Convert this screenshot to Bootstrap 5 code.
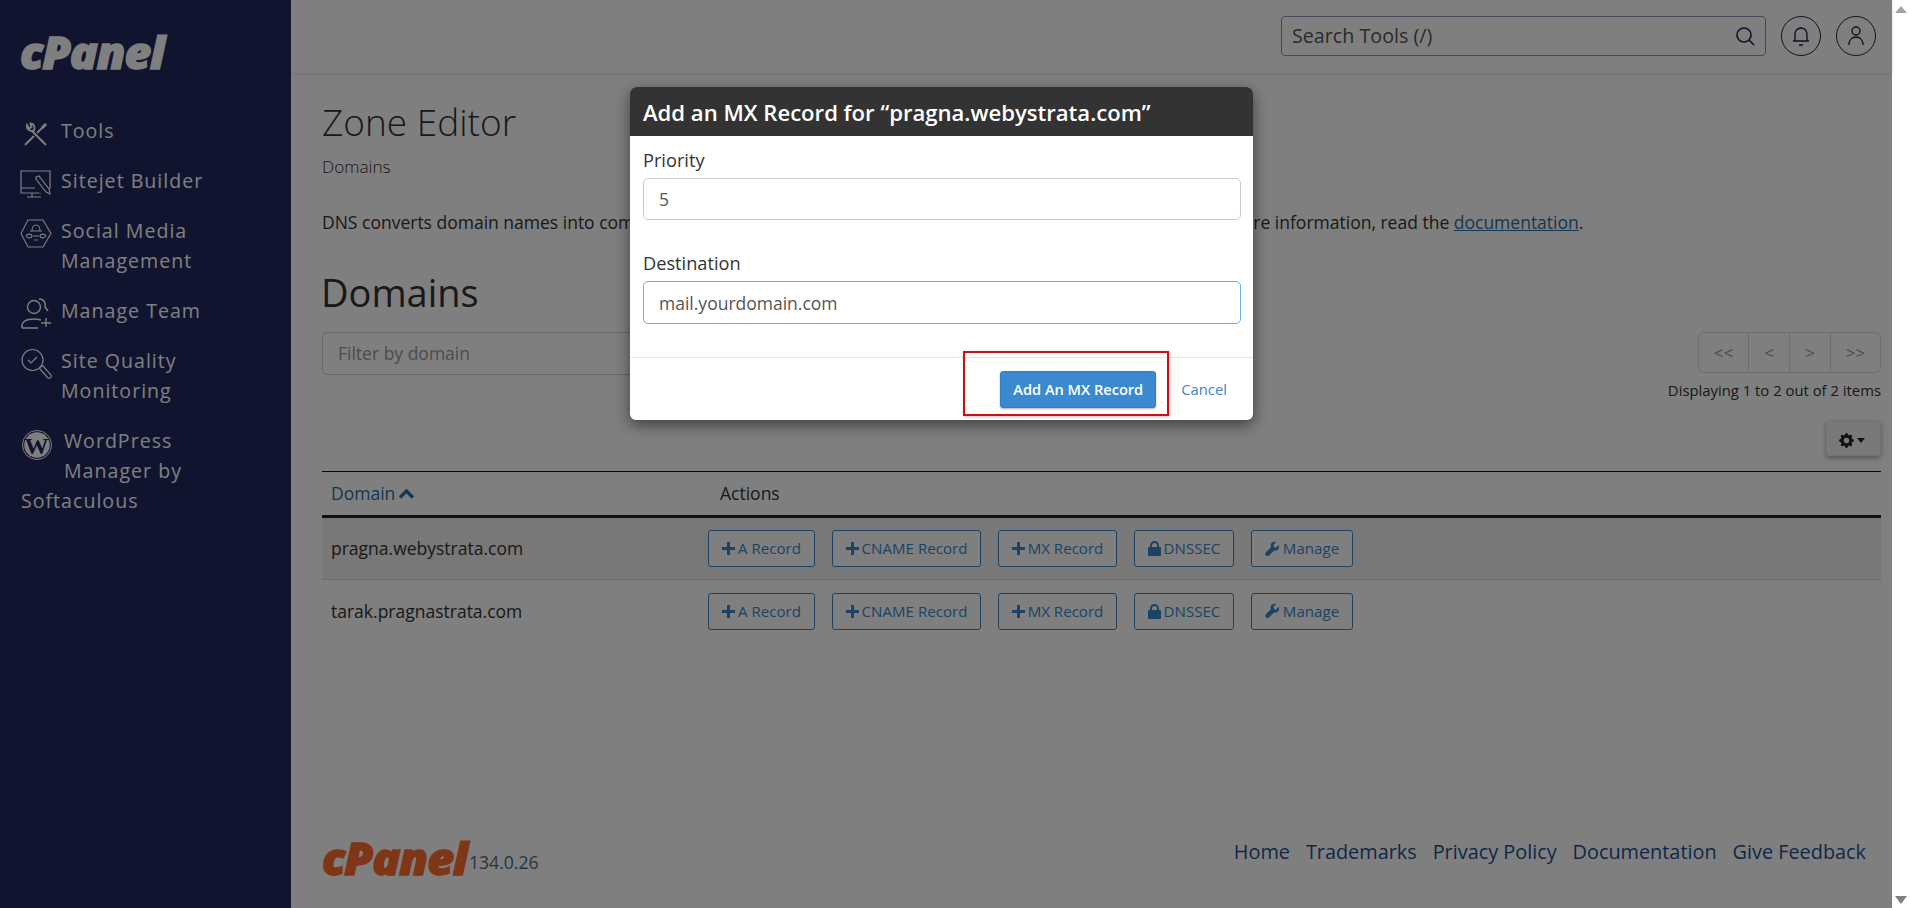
<!doctype html>
<html lang="en">
<head>
<meta charset="utf-8">
<title>Zone Editor</title>
<link href="https://cdn.jsdelivr.net/npm/bootstrap@5.3.0/dist/css/bootstrap.min.css" rel="stylesheet">
<style>
html,body{height:100%;overflow:hidden}
body{font-family:"Open Sans","Liberation Sans",sans-serif;background:#fff;color:#333;font-size:18px}
.stage{height:908px;width:1910px}
.shell{width:1892px;height:908px;position:relative}
.rail{width:18px;background:#fff;padding:6px 3px 4px 3px}
.tri-up{width:0;height:0;border-left:6px solid transparent;border-right:6px solid transparent;border-bottom:7px solid #a3a3a3}
.tri-down{width:0;height:0;border-left:6px solid transparent;border-right:6px solid transparent;border-top:8px solid #808080}
.side{width:291px;background:#20285d;color:#fff;padding-top:30px}
.side-logo{display:block;margin-left:19px;margin-bottom:31px;overflow:visible}
.side-item{padding:10px 60px 10px 21px;font-size:19.6px;line-height:30px;letter-spacing:1px;color:#fff}
.ico-box{width:40px;height:30px}
.ico-box.tall{height:60px}
.ico-box.wp{width:43px;height:60px}
.ico-box svg{display:block;overflow:visible}
.logo-txt{font-family:"Open Sans",sans-serif;font-weight:800;font-style:italic;letter-spacing:-1px}
.topbar{height:73px;background:#fff;box-shadow:0 1px 4px rgba(0,0,0,.12);padding-right:16px;padding-top:16px;gap:15px}
.search{width:485px;height:40px;border:1px solid #8b93b0;border-radius:4px;padding:0 10px;font-size:19.7px;color:#555}
.circle{width:40px;height:40px;border:1px solid #1b2545;border-radius:50%}
.body-pad{padding:0 11px 0 31px}
.zone-h{font-size:37px;font-weight:300;line-height:48px;margin:25px 0 0;color:#333}
.zone-sub{font-size:17.2px;font-weight:300;line-height:24px;margin-top:9px;color:#333}
.zone-p{font-size:17.5px;line-height:27px;margin:30px 0 0;white-space:nowrap;color:#333}
.zone-p a{color:#2b6ca3}
.zone-h2{font-size:38px;font-weight:400;line-height:44px;margin:34px 0 0 -1px;color:#333}
.filter-row{margin-top:18px;height:139px}
.filter{width:460px;height:43px;border:1px solid #ccc;border-radius:5px;padding:0 15px;font-size:17.5px;color:#999;background:#fff;line-height:41px}
.pager .btn{height:41px;width:42px;padding:0;font-size:17px;border-color:#ddd;color:#999;background:#fff;opacity:1}
.pager .btn.wide{width:51px}
.disp{font-size:14.85px;line-height:20px;margin-top:7px;color:#333}
.gear{width:55px;height:35px;margin-top:21px;background:#f2f2f2;border:1px solid #e6e6e6;border-radius:3px;box-shadow:0 2px 5px rgba(0,0,0,.35);color:#222;padding:0 3px 0 0}
.gear .car{display:inline-block;width:0;height:0;border-left:4.5px solid transparent;border-right:4.5px solid transparent;border-top:5px solid #222;margin-left:3px;vertical-align:2px}
.dtable{width:1559px;margin:0;border-top:1px solid #111;table-layout:fixed}
.dtable th{font-weight:400;height:45px;padding:0 9px;border-bottom:3px solid #222;vertical-align:middle;font-size:17.5px;background:#fff;color:#333}
.dtable th a{color:#2b6ca3;text-decoration:none}
.dtable th svg{margin-left:3px;vertical-align:1px}
.dtable td{height:63px;padding:0 9px;font-size:17.5px;vertical-align:middle;border-bottom:1px solid #ddd;color:#333}
.dtable tr:last-child td{border-bottom:0}
.dtable tr.alt td{background:#f0f0f0}
.dtable th.act{padding-left:21px}
.acts{gap:17px}
.act-btn{height:37px;padding:0;font-size:15.1px;line-height:35px;color:#3b86c8;border:1px solid #3b86c8;background:#fff;border-radius:3px;display:inline-flex;align-items:center;justify-content:center;gap:3px;text-decoration:none}
.act-btn svg{flex:none;fill:currentColor}
.wa{width:107px}.wc{width:149px}.wm{width:119px}.wd{width:100px}.wg{width:102px}
.foot{padding:0 26px 0 31px;height:88px}
.foot-ver{font-size:17.6px;color:#4f6a82;margin-top:29px;margin-left:-1px}
.foot-links{gap:16px;margin-top:17px;font-size:19.85px}
.foot-links a{color:#1c4f94;text-decoration:none}
.shade{position:absolute;inset:0;width:auto;height:auto;background:#000;opacity:.5;z-index:10}
.dlg{position:absolute;left:630px;top:87px;width:623px;height:333px;z-index:20;border:0;border-radius:6px;overflow:visible;box-shadow:0 5px 15px rgba(0,0,0,.5)}
.dlg .modal-header{height:49px;background:#333;color:#fff;padding:0 13px;border:0;border-radius:6px 6px 0 0}
.dlg .modal-title{font-size:22.1px;font-weight:600;line-height:28px}
.dlg .modal-body{padding:12px 12px 0 13px}
.lab{font-size:18.2px;font-weight:500;line-height:24px;color:#333;margin-bottom:6px}
.dlg .form-control{height:42px;font-size:17.5px;color:#555;border-radius:5px;padding:0 15px;box-shadow:none;border-color:#ccc}
.dlg .form-control.focused{height:43px;border-color:#66afe9}
.gap-field{margin-top:31px}
.dlg .modal-footer{position:absolute;left:0;right:0;top:270px;height:63px;padding:0;border-top:1px solid #e5e5e5;display:flex;justify-content:flex-end;align-items:flex-start;flex-wrap:nowrap}
.btn-add{background:#3b8ad0;border:1px solid #3180c4;color:#fff;height:37px;width:156px;margin:13px 0 0;padding:0;font-size:14.6px;font-weight:600;border-radius:3px;box-shadow:0 1px 2px rgba(0,0,0,.3)}
.cancel{color:#3b86c8;font-size:14.8px;text-decoration:none;margin:21px 26px 0 25px;line-height:20px}
.red-mark{position:absolute;left:333px;top:-7px;width:206px;height:65px;border:2px solid #c8121a;box-shadow:1px 1px 3px rgba(0,0,0,.25)}
</style>
</head>
<body>
<div class="stage d-flex">
  <div class="shell d-flex">
    <nav class="side flex-shrink-0">
      <svg class="side-logo" width="152" height="45" viewBox="0 0 152 45"><text class="logo-txt" x="1" y="39" font-size="44" fill="#fff" stroke="#fff" stroke-width="1.4" textLength="144" lengthAdjust="spacingAndGlyphs">cPanel</text></svg>
      <div class="side-item"><span class="ico-box float-start"><svg width="30" height="30" viewBox="0 0 30 30" fill="none" stroke="#fff" stroke-width="1.9"><path d="M11 15l14 14M6 9c-1 4 3 7 7 5.500 1.500-3 0-7-3.500-7l1 3.500-2 1.500z"/><path d="M4 29l9-9M16 17l6-6"/><path d="M21 12l4-4" stroke-width="2.800"/></svg></span>Tools</div>
      <div class="side-item"><span class="ico-box float-start"><svg width="30" height="30" viewBox="0 0 30 30" fill="none" stroke="#fff" stroke-width="1.2"><path d="M18 27H0V5h29v18M0 22h14M11 27v4M19 27v1M6 31h14"/><path d="M15 11l3-1 10 13 1 5-4-2-10-13z"/></svg></span>Sitejet Builder</div>
      <div class="side-item"><span class="ico-box tall float-start"><svg width="30" height="30" viewBox="0 0 30 30" fill="none" stroke="#fff" stroke-width="1.1"><path d="M7 4h15l8 13.500L22 31H7L0 17.500z"/><path d="M9 15h12M11 15c0-8 8-8 8 0M5 20c2-3 6-2 6 0s-4 3-6 0zM25 20c-2-3-6-2-6 0s4 3 6 0zM12 20h6M13 24h4"/></svg></span>Social Media Management</div>
      <div class="side-item"><span class="ico-box float-start"><svg width="30" height="30" viewBox="0 -2 30 30" fill="none" stroke="#fff" stroke-width="1.4"><circle cx="13" cy="9" r="6.500"/><path d="M1 30c-1-7 5-9 12-9 3 0 5 .5 7 1M1 30h16M25 20v9M20 25h10M18 1c5 0 7 4 6 8l3 4"/></svg></span>Manage Team</div>
      <div class="side-item"><span class="ico-box tall float-start"><svg width="30" height="32" viewBox="0 -3 30 32" fill="none" stroke="#fff" stroke-width="1.2"><circle cx="11.500" cy="11" r="10.500"/><path d="M7 11l3 3 6-6M19 18l3-1 8 9c1 2-1 4-3 3l-8-9z"/></svg></span>Site Quality Monitoring</div>
      <div class="side-item"><span class="ico-box wp float-start"><svg width="30" height="30" viewBox="0 0 30 30"><circle cx="16" cy="19" r="14.500" fill="none" stroke="#fff" stroke-width="1"/><circle cx="16" cy="19" r="12.800" fill="#fff"/><text x="16" y="27.500" text-anchor="middle" font-family="Liberation Serif" font-weight="700" font-size="24" fill="#20285d">W</text></svg></span>WordPress Manager by Softaculous</div>
    </nav>
    <main class="flex-grow-1 d-flex flex-column">
      <header class="topbar d-flex justify-content-end flex-shrink-0">
        <div class="search d-flex align-items-center justify-content-between"><span>Search Tools (/)</span>
          <svg width="20" height="20" viewBox="0 0 20 20" fill="none" stroke="#1b2545" stroke-width="1.6"><circle cx="9" cy="9" r="7"/><path d="M14 14l5 5"/></svg></div>
        <div class="circle d-flex align-items-center justify-content-center"><svg width="18" height="22" viewBox="0 0 18 22" fill="none" stroke="#1b2545" stroke-width="1.4"><path d="M3 16V9a6 6 0 0 1 12 0v7M1 16h16M7 20h4M9 3V2"/></svg></div>
        <div class="circle d-flex align-items-center justify-content-center"><svg width="18" height="22" viewBox="0 0 18 22" fill="none" stroke="#1b2545" stroke-width="1.4"><circle cx="9" cy="6" r="4"/><path d="M2 20c0-5 3-8 7-8s7 3 7 8"/></svg></div>
      </header>
      <section class="body-pad">
        <h1 class="zone-h">Zone Editor</h1>
        <div class="zone-sub">Domains</div>
        <p class="zone-p">DNS converts domain names into computer-readable IP addresses. Use this feature to manage DNS zones. For more information, read the <a href="#">documentation</a>.</p>
        <h2 class="zone-h2">Domains</h2>
        <div class="filter-row d-flex justify-content-between">
          <div class="filter">Filter by domain</div>
          <div class="d-flex flex-column align-items-end">
            <div class="btn-group pager"><button class="btn wide" disabled>&lt;&lt;</button><button class="btn" disabled>&lt;</button><button class="btn" disabled>&gt;</button><button class="btn wide" disabled>&gt;&gt;</button></div>
            <div class="disp">Displaying 1 to 2 out of 2 items</div>
            <button class="gear btn"><svg width="15" height="15" viewBox="0 0 16 16" fill="#222"><path d="M9.405 1.05c-.413-1.4-2.397-1.4-2.81 0l-.1.34a1.464 1.464 0 0 1-2.105.872l-.31-.17c-1.283-.698-2.686.705-1.987 1.987l.169.311c.446.82.023 1.841-.872 2.105l-.34.1c-1.4.413-1.4 2.397 0 2.81l.34.1a1.464 1.464 0 0 1 .872 2.105l-.17.31c-.698 1.283.705 2.686 1.987 1.987l.311-.169a1.464 1.464 0 0 1 2.105.872l.1.34c.413 1.4 2.397 1.4 2.81 0l.1-.34a1.464 1.464 0 0 1 2.105-.872l.31.17c1.283.698 2.686-.705 1.987-1.987l-.169-.311a1.464 1.464 0 0 1 .872-2.105l.34-.1c1.4-.413 1.4-2.397 0-2.81l-.34-.1a1.464 1.464 0 0 1-.872-2.105l.17-.31c.698-1.283-.705-2.686-1.987-1.987l-.311.169a1.464 1.464 0 0 1-2.105-.872l-.1-.34zM8 10.93a2.929 2.929 0 1 1 0-5.86 2.929 2.929 0 0 1 0 5.858z"/></svg><span class="car"></span></button>
          </div>
        </div>
        <table class="table dtable">
          <colgroup><col style="width:377px"><col></colgroup>
          <thead><tr><th><a href="#">Domain<svg width="17" height="11" viewBox="0 0 17 11" fill="none" stroke="#2b6ca3" stroke-width="3.200"><path d="M2 9.500L8.500 3 15 9.500"/></svg></a></th><th class="act">Actions</th></tr></thead>
          <tbody>
            <tr class="alt"><td>pragna.webystrata.com</td><td><div class="d-flex acts">
              <a class="act-btn wa" href="#"><svg width="13" height="13" viewBox="0 0 13 13"><path d="M5 0h3v5h5v3H8v5H5V8H0V5h5z"/></svg>A Record</a>
              <a class="act-btn wc" href="#"><svg width="13" height="13" viewBox="0 0 13 13"><path d="M5 0h3v5h5v3H8v5H5V8H0V5h5z"/></svg>CNAME Record</a>
              <a class="act-btn wm" href="#"><svg width="13" height="13" viewBox="0 0 13 13"><path d="M5 0h3v5h5v3H8v5H5V8H0V5h5z"/></svg>MX Record</a>
              <a class="act-btn wd" href="#"><svg width="13" height="15" viewBox="0 0 13 15"><path d="M2 6V4.500a4.500 4.500 0 0 1 9 0V6h1a1 1 0 0 1 1 1v7a1 1 0 0 1-1 1H1a1 1 0 0 1-1-1V7a1 1 0 0 1 1-1zm2 0h5V4.500a2.500 2.500 0 0 0-5 0z"/></svg>DNSSEC</a>
              <a class="act-btn wg" href="#"><svg width="15" height="16" viewBox="0 0 16 16"><path d="M15 3.500l-3 3-2.500-.5-.5-2.500 3-3C9.500-.2 6.500 1 6 3.500c-.2 1 0 2 .3 2.600L1 11.500c-1 1-1 2.300 0 3.300s2.300 1 3.200 0l5.600-5.300c2.600.9 5.800-.9 5.200-6z"/></svg>Manage</a>
            </div></td></tr>
            <tr><td>tarak.pragnastrata.com</td><td><div class="d-flex acts">
              <a class="act-btn wa" href="#"><svg width="13" height="13" viewBox="0 0 13 13"><path d="M5 0h3v5h5v3H8v5H5V8H0V5h5z"/></svg>A Record</a>
              <a class="act-btn wc" href="#"><svg width="13" height="13" viewBox="0 0 13 13"><path d="M5 0h3v5h5v3H8v5H5V8H0V5h5z"/></svg>CNAME Record</a>
              <a class="act-btn wm" href="#"><svg width="13" height="13" viewBox="0 0 13 13"><path d="M5 0h3v5h5v3H8v5H5V8H0V5h5z"/></svg>MX Record</a>
              <a class="act-btn wd" href="#"><svg width="13" height="15" viewBox="0 0 13 15"><path d="M2 6V4.500a4.500 4.500 0 0 1 9 0V6h1a1 1 0 0 1 1 1v7a1 1 0 0 1-1 1H1a1 1 0 0 1-1-1V7a1 1 0 0 1 1-1zm2 0h5V4.500a2.500 2.500 0 0 0-5 0z"/></svg>DNSSEC</a>
              <a class="act-btn wg" href="#"><svg width="15" height="16" viewBox="0 0 16 16"><path d="M15 3.500l-3 3-2.500-.5-.5-2.500 3-3C9.500-.2 6.500 1 6 3.500c-.2 1 0 2 .3 2.600L1 11.500c-1 1-1 2.300 0 3.300s2.300 1 3.200 0l5.600-5.300c2.600.9 5.800-.9 5.200-6z"/></svg>Manage</a>
            </div></td></tr>
          </tbody>
        </table>
      </section>
      <footer class="foot mt-auto d-flex justify-content-between flex-shrink-0">
        <div class="d-flex align-items-start">
          <svg width="148" height="40" viewBox="0 0 148 40" class="mt-3" style="overflow:visible"><text class="logo-txt" x="0" y="39" font-size="44" fill="#ff6c2c" stroke="#ff6c2c" stroke-width="1.4" textLength="145" lengthAdjust="spacingAndGlyphs">cPanel</text></svg>
          <span class="foot-ver">134.0.26</span>
        </div>
        <div class="foot-links d-flex"><a href="#">Home</a><a href="#">Trademarks</a><a href="#">Privacy Policy</a><a href="#">Documentation</a><a href="#">Give Feedback</a></div>
      </footer>
    </main>
    <div class="shade"></div>
    <div class="dlg modal-content bg-white">
      <div class="modal-header"><h5 class="modal-title">Add an MX Record for “pragna.webystrata.com”</h5></div>
      <div class="modal-body">
        <div class="lab">Priority</div>
        <input class="form-control" value="5">
        <div class="lab gap-field">Destination</div>
        <input class="form-control focused" value="mail.yourdomain.com">
      </div>
      <div class="modal-footer">
        <button class="btn-add btn">Add An MX Record</button>
        <a class="cancel" href="#">Cancel</a>
        <div class="red-mark"></div>
      </div>
    </div>
  </div>
  <div class="rail d-flex flex-column justify-content-between"><div class="tri-up"></div><div class="tri-down"></div></div>
</div>
<script src="https://cdn.jsdelivr.net/npm/bootstrap@5.3.0/dist/js/bootstrap.bundle.min.js"></script>
</body>
</html>
